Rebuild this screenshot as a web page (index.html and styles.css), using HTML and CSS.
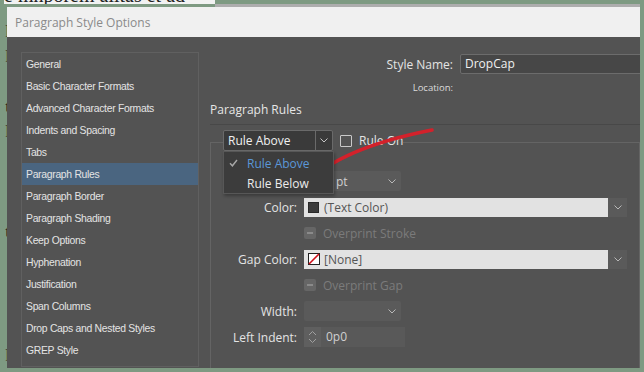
FILE: index.html
```html
<!DOCTYPE html>
<html>
<head>
<meta charset="utf-8">
<link rel="stylesheet" href="styles.css">
</head>
<body>
<div class="screen">
  <div class="peek">
    <div class="doc-top"><span>e mnporem alitas et ad</span></div>
    <div class="win-edge"></div>
  </div>
  <div class="middle">
    <div class="gutter">
      <span>l</span><span>l</span><span></span><span>t</span><span>l</span><span></span><span></span><span></span><span>t</span><span></span><span></span><span></span><span></span><span>l</span>
    </div>
    <div class="dialog">
      <div class="titlebar">Paragraph Style Options</div>
      <div class="body">
        <ul class="nav">
          <li>General</li>
          <li>Basic Character Formats</li>
          <li>Advanced Character Formats</li>
          <li>Indents and Spacing</li>
          <li>Tabs</li>
          <li class="active">Paragraph Rules</li>
          <li>Paragraph Border</li>
          <li>Paragraph Shading</li>
          <li>Keep Options</li>
          <li>Hyphenation</li>
          <li>Justification</li>
          <li>Span Columns</li>
          <li>Drop Caps and Nested Styles</li>
          <li>GREP Style</li>
        </ul>
        <div class="content">
          <div class="name-row">
            <label>Style Name:</label>
            <div class="input">DropCap</div>
          </div>
          <div class="loc">Location:</div>
          <h2 class="section">Paragraph Rules</h2>
          <fieldset class="group">
            <legend>
              <div class="legend-row">
                <div class="select-wrap">
                  <div class="select">
                    <span class="val">Rule Above</span>
                    <span class="btn"><svg width="8" height="5" viewBox="0 0 8 5"><path d="M.5.5 4 4 7.5.5" fill="none" stroke="#c4c4c4"/></svg></span>
                  </div>
                  <ul class="menu">
                    <li class="sel"><span class="tick"><svg width="9" height="8" viewBox="0 0 9 8"><path d="M1 4.2 3.4 6.8 8 1" fill="none" stroke="#a8a8a8" stroke-width="1.4"/></svg></span>Rule Above</li>
                    <li><span class="tick"></span>Rule Below</li>
                  </ul>
                </div>
                <span class="cb"></span>
                <span class="cb-label">Rule On</span>
              </div>
            </legend>
            <div class="grid">
              <span class="lbl"></span>
              <div class="combo">
                <span class="spin"><svg width="9" height="14" viewBox="0 0 9 14"><path d="M1 5 4.5 1.5 8 5M1 9 4.5 12.5 8 9" fill="none" stroke="#a0a0a0"/></svg></span>
                <span class="num pt">pt</span>
                <span class="chev"><svg width="8" height="5" viewBox="0 0 8 5"><path d="M.5.5 4 4 7.5.5" fill="none" stroke="#b8b8b8"/></svg></span>
              </div>

              <span class="lbl">Color:</span>
              <div class="swatch-field">
                <div class="swatch-box"><span class="swatch"></span>(Text Color)</div>
                <span class="drop"><svg width="8" height="5" viewBox="0 0 8 5"><path d="M.5.5 4 4 7.5.5" fill="none" stroke="#b8b8b8"/></svg></span>
              </div>

              <span></span>
              <div class="check-row"><span class="cb-dis"><span class="dash"></span></span><span class="dis-label">Overprint Stroke</span></div>

              <span class="lbl">Gap Color:</span>
              <div class="swatch-field">
                <div class="swatch-box"><svg class="none-swatch" width="12" height="12" viewBox="0 0 12 12"><rect x=".5" y=".5" width="11" height="11" fill="#fff" stroke="#222"/><path d="M1 11 11 1" stroke="#d0101a" stroke-width="1.6"/></svg>[None]</div>
                <span class="drop"><svg width="8" height="5" viewBox="0 0 8 5"><path d="M.5.5 4 4 7.5.5" fill="none" stroke="#b8b8b8"/></svg></span>
              </div>

              <span></span>
              <div class="check-row"><span class="cb-dis"><span class="dash"></span></span><span class="dis-label">Overprint Gap</span></div>

              <span class="lbl">Width:</span>
              <div class="combo">
                <span class="num"></span>
                <span class="chev"><svg width="8" height="5" viewBox="0 0 8 5"><path d="M.5.5 4 4 7.5.5" fill="none" stroke="#b8b8b8"/></svg></span>
              </div>

              <span class="lbl">Left Indent:</span>
              <div class="spin-field">
                <span class="spin"><svg width="9" height="14" viewBox="0 0 9 14"><path d="M1 5 4.5 1.5 8 5M1 9 4.5 12.5 8 9" fill="none" stroke="#a0a0a0"/></svg></span>
                <span class="num">0p0</span>
              </div>
            </div>
          </fieldset>
        </div>
      </div>
    </div>
  </div>
</div>
<svg class="scribble" width="644" height="372" viewBox="0 0 644 372"><path d="M306 184 Q340 148 432 130" fill="none" stroke="#d3212b" stroke-width="3.6" stroke-linecap="round"/></svg>
</body>
</html>
```
FILE: styles.css
```css
* { box-sizing: border-box; }
html, body { margin: 0; padding: 0; }
body {
  width: 644px;
  height: 372px;
  overflow: hidden;
  background: #7e9a82;
  position: relative;
  font-family: "Open Sans", "Liberation Sans", sans-serif;
}
.screen { display: flex; flex-direction: column; height: 372px; }
.peek { height: 7px; display: flex; flex: none; }
.doc-top {
  margin-left: 4px;
  width: 211px;
  height: 4px;
  overflow: hidden;
  background: #f2f2f2;
}
.doc-top span {
  display: block;
  font: 20px/20px "Liberation Serif", serif;
  color: #222;
  margin-top: -15px;
  white-space: nowrap;
}
.win-edge { width: 425px; height: 3px; margin-top: 4px; background: #adadad; }
.middle { display: flex; height: 361px; flex: none; }
.gutter {
  width: 7px;
  flex: none;
  overflow: hidden;
  display: flex;
  flex-direction: column;
  align-items: flex-end;
  padding-top: 12px;
  font: 17px/25px "Liberation Serif", serif;
  color: #222;
}
.gutter span { height: 25px; margin-right: -3px; }
.dialog {
  width: 633px;
  flex: none;
  display: flex;
  flex-direction: column;
  overflow: hidden;
}
.titlebar {
  height: 30px;
  flex: none;
  background: #f0f0f0;
  color: #8a8a8a;
  font-size: 12px;
  line-height: 31px;
  padding-left: 8px;
}
.body {
  flex: 1;
  background: #535353;
  display: flex;
  padding: 15px 0 0 14px;
  overflow: hidden;
}
.nav {
  width: 178px;
  height: 315px;
  border: 1px solid #606060;
  list-style: none;
  margin: 0;
  padding: 0;
  flex: none;
}
.nav li {
  height: 22px;
  line-height: 24px;
  padding-left: 4px;
  font-family: "Liberation Sans", sans-serif;
  font-size: 10.4px;
  letter-spacing: -0.3px;
  color: #e4e4e4;
  white-space: nowrap;
}
.nav li.active { background: #4a6580; }
.content {
  margin-left: 11px;
  flex: 1;
  padding-top: 2px;
  min-width: 0;
  font-size: 12px;
  color: #e4e4e4;
}
.name-row { display: flex; align-items: center; height: 20px; }
.name-row label { width: 243px; text-align: right; flex: none; }
.input {
  margin-left: 7px;
  width: 200px;
  flex: none;
  height: 20px;
  background: #474747;
  border: 1px solid #6c6c6c;
  border-radius: 2px;
  padding-left: 4px;
  line-height: 18px;
  color: #f0f0f0;
}
.loc {
  width: 243px;
  text-align: right;
  margin-top: 6px;
  height: 16px;
  line-height: 16px;
  font-size: 9.5px;
  color: #dcdcdc;
}
.section {
  margin: 5px 0 0;
  height: 24px;
  font-size: 12px;
  font-weight: normal;
  line-height: 18px;
  border-bottom: 1px solid #484848;
  color: #e6e6e6;
}
.group {
  margin: 5px 0 0;
  padding: 17px 0 0 0;
  border: 1px solid #646464;
  height: 260px;
  min-width: 0;
}
.group legend { margin-left: 12px; padding: 0 0 3px; }
.legend-row { display: flex; align-items: center; }
.select-wrap { position: relative; }
.select {
  width: 110px;
  height: 21px;
  display: flex;
  background: #3a3a3a;
  border: 1px solid #6a6a6a;
  border-radius: 2px;
  color: #f0f0f0;
}
.select .val { flex: 1; padding-left: 4px; line-height: 19px; }
.select .btn {
  width: 17px;
  border-left: 1px solid #6a6a6a;
  display: flex;
  align-items: center;
  justify-content: center;
}
.menu {
  position: absolute;
  top: 21px;
  left: 0;
  width: 111px;
  margin: 0;
  padding: 1px 0 0;
  list-style: none;
  background: #3c3c3c;
  border: 1px solid #575757;
  box-shadow: 1px 2px 3px rgba(0, 0, 0, 0.3);
  z-index: 2;
}
.menu li { display: flex; align-items: center; height: 20px; color: #ececec; }
.menu li.sel { color: #5b97d8; }
.tick { width: 23px; padding-left: 5px; display: flex; align-items: center; }
.cb {
  width: 12px;
  height: 12px;
  margin-left: 7px;
  border: 1px solid #c9c9c9;
  border-radius: 1px;
}
.cb-label { margin-left: 7px; color: #e4e4e4; }
.grid {
  display: grid;
  grid-template-columns: 86px auto;
  column-gap: 7px;
  row-gap: 6px;
  grid-auto-rows: 20px;
  align-items: center;
  justify-items: start;
}
.grid .lbl { justify-self: end; color: #e4e4e4; }
.combo {
  display: flex;
  align-items: center;
  width: 97px;
  height: 20px;
  background: #5a5a5a;
  border-radius: 2px;
}
.combo .num { flex: 1; padding-left: 5px; color: #d0d0d0; }
.combo .pt { padding-left: 15px; }
.chev { width: 18px; display: flex; justify-content: center; }
.spin {
  width: 17px;
  height: 20px;
  background: #5f5f5f;
  display: flex;
  align-items: center;
  justify-content: center;
  flex: none;
}
.swatch-field { display: flex; height: 19px; }
.swatch-box {
  width: 304px;
  background: #e2e2e2;
  display: flex;
  align-items: center;
  padding-left: 4px;
  color: #555;
}
.swatch {
  width: 11px;
  height: 11px;
  border: 1px solid #2a2a2a;
  background: #3c3c3c;
  margin-right: 5px;
}
.none-swatch { margin-right: 4px; }
.drop {
  width: 19px;
  background: #5a5a5a;
  display: flex;
  align-items: center;
  justify-content: center;
}
.check-row { display: flex; align-items: center; }
.cb-dis {
  width: 12px;
  height: 12px;
  background: #666;
  border-radius: 2px;
  display: flex;
  align-items: center;
  justify-content: center;
}
.dash { width: 6px; height: 2px; background: #8a8a8a; }
.dis-label { margin-left: 7px; color: #7b7b7b; }
.spin-field { display: flex; height: 20px; width: 101px; }
.spin-field .num {
  flex: 1;
  background: #595959;
  padding-left: 5px;
  line-height: 20px;
  color: #d0d0d0;
}
.scribble { position: absolute; top: 0; left: 0; pointer-events: none; }
```
